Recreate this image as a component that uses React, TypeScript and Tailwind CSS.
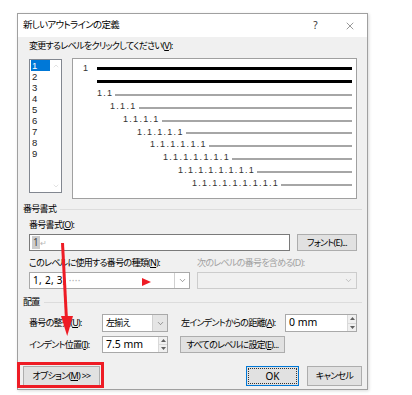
import { X, ChevronDown, ChevronUp } from "lucide-react";
import type { ReactNode } from "react";

const U = ({ children }: { children: ReactNode }) => (
  <span className="underline underline-offset-[1px]">{children}</span>
);

const levels = [
  { text: "1.1", pad: "pl-[24px]" },
  { text: "1.1.1", pad: "pl-[37px]" },
  { text: "1.1.1.1", pad: "pl-[50px]" },
  { text: "1.1.1.1.1", pad: "pl-[64px]" },
  { text: "1.1.1.1.1.1", pad: "pl-[77px]" },
  { text: "1.1.1.1.1.1.1", pad: "pl-[90px]" },
  { text: "1.1.1.1.1.1.1.1", pad: "pl-[105px]" },
  { text: "1.1.1.1.1.1.1.1.1", pad: "pl-[119px]" },
];

const SpinArrows = () => (
  <div className="w-[9px] h-full flex flex-col bg-[#f0f0f0] border-l border-[#d9d9d9]">
    <div className="flex-1 flex items-center justify-center border-b border-[#d9d9d9]">
      <svg width="5" height="3" viewBox="0 0 5 3">
        <polygon points="0,3 5,3 2.5,0" fill="#606060" />
      </svg>
    </div>
    <div className="flex-1 flex items-center justify-center">
      <svg width="5" height="3" viewBox="0 0 5 3">
        <polygon points="0,0 5,0 2.5,3" fill="#606060" />
      </svg>
    </div>
  </div>
);

const Section = ({ title }: { title: string }) => (
  <div className="flex items-center leading-[12px]">
    <span>{title}</span>
    <div className="flex-1 h-px bg-[#dcdcdc] ml-[4px]" />
  </div>
);

export default function App() {
  return (
    <div className="relative w-[412px] h-[395px] overflow-hidden bg-white pt-[13px] pl-[17px] text-[9px] tracking-[-0.7px] whitespace-nowrap text-black font-['Noto_Sans','Noto_Sans_CJK_JP',sans-serif] [font-feature-settings:'palt']">
      <div className="w-[351px] h-[377px] flex flex-col border border-[#a0a0a0] shadow-[1px_1px_3px_rgba(0,0,0,0.15)]">
        {/* Title bar */}
        <div className="h-[23px] bg-white flex items-center pl-[5px] pr-[7px]">
          <span className="text-[9.5px]">新しいアウトラインの定義</span>
          <span className="ml-auto w-[20px] text-center text-[10px] text-[#333]">?</span>
          <span className="ml-[15px] w-[20px] flex justify-center">
            <X size={12} strokeWidth={1} className="text-[#333]" />
          </span>
        </div>

        {/* Body */}
        <div className="flex-1 bg-[#f0f0f0] px-[5px] flex flex-col">
          <div className="pl-[6px] pr-[5px] flex flex-col">
            <div className="mt-[3px] leading-[12px]">
              変更するレベルをクリックしてください(<U>V</U>):
            </div>
            <div className="mt-[6px] flex gap-[10px]">
              {/* level list */}
              <div className="mt-[1px] w-[33px] h-[134px] bg-white border border-[#828790] flex">
                <div className="flex-1 flex flex-col text-[9.5px] tracking-normal font-['Liberation_Sans',sans-serif]">
                  {["1", "2", "3", "4", "5", "6", "7", "8", "9"].map((n) => (
                    <div
                      key={n}
                      className={
                        n === "1"
                          ? "ml-[1px] h-[11px] leading-[11px] pl-[1px] bg-[#0078d7] text-white"
                          : "ml-[1px] h-[11px] leading-[11px] pl-[1px] text-[#222]"
                      }
                    >
                      {n}
                    </div>
                  ))}
                </div>
                <div className="w-[11px] flex flex-col justify-between items-center py-[2px]">
                  <ChevronUp size={8} strokeWidth={1.5} className="text-[#c4c4c4]" />
                  <ChevronDown size={8} strokeWidth={1.5} className="text-[#c4c4c4]" />
                </div>
              </div>
              {/* preview */}
              <div className="flex-1 h-[141px] bg-white border border-[#a0a0a0] pt-[3px] pr-[4px] flex flex-col text-[9px] text-[#333] font-['Liberation_Sans',sans-serif] tracking-[1.3px]">
                <div className="h-[12.8px] flex items-center">
                  <span className="w-[24px] pl-[10px]">1</span>
                  <div className="flex-1 h-[3px] bg-black" />
                </div>
                <div className="h-[12.8px] flex items-center pl-[24px]">
                  <div className="flex-1 h-[3px] bg-black" />
                </div>
                {levels.map((l) => (
                  <div key={l.text} className={`h-[12.8px] flex items-center ${l.pad}`}>
                    <span>{l.text}</span>
                    <div className="flex-1 h-[2px] bg-[#a6a6a6] ml-[2px] mt-[2px]" />
                  </div>
                ))}
              </div>
            </div>
          </div>

          {/* 番号書式 */}
          <div className="mt-[4px]">
            <Section title="番号書式" />
          </div>
          <div className="pl-[6px] pr-[5px] flex flex-col">
            <div className="mt-[4px] leading-[12px]">
              番号書式(<U>O</U>):
            </div>
            <div className="mt-[3px] flex gap-[7px] h-[17px]">
              <div className="w-[261px] bg-white border border-[#7a7a7a] flex items-center pl-[2px]">
                <span className="bg-[#cccccc] text-[#444] px-[1px] leading-[13px] text-[10px] tracking-normal">1</span>
                <span className="text-[#b8b8b8] text-[8px]">↵</span>
              </div>
              <div className="flex-1 bg-[#e1e1e1] border border-[#adadad] flex items-center justify-center">
                フォント(E)...
              </div>
            </div>
            <div className="mt-[6px] flex gap-[7px] leading-[12px]">
              <div className="w-[161px]">
                このレベルに使用する番号の種類(<U>N</U>):
              </div>
              <div className="flex-1 text-[#a0a0a0]">次のレベルの番号を含める(D):</div>
            </div>
            <div className="mt-[3px] flex gap-[7px] h-[17px]">
              <div className="w-[161px] bg-white border border-[#a9a9a9] flex items-center">
                <span className="flex-1 pl-[3px] text-[10px] tracking-[0.3px]">
                  1, 2, 3, <span className="text-[#b0b0b0]">····</span>
                </span>
                <div className="w-[15px] h-full border-l border-[#d0d0d0] flex items-center justify-center">
                  <ChevronDown size={9} strokeWidth={1.5} className="text-[#555]" />
                </div>
              </div>
              <div className="flex-1 bg-[#f0f0f0] border border-[#cccccc] flex items-center justify-end">
                <div className="w-[15px] h-full flex items-center justify-center">
                  <ChevronDown size={9} strokeWidth={1.5} className="text-[#a0a0a0]" />
                </div>
              </div>
            </div>
          </div>

          {/* 配置 */}
          <div className="mt-[7px]">
            <Section title="配置" />
          </div>
          <div className="pl-[6px] pr-[5px] flex flex-col">
            <div className="mt-[6px] h-[18px] flex items-center">
              <span className="w-[73px]">
                番号の整列(<U>U</U>):
              </span>
              <div className="w-[66px] h-full bg-white border border-[#a9a9a9] flex items-center">
                <span className="flex-1 pl-[3px]">左揃え</span>
                <div className="w-[15px] h-full bg-[#e5e5e5] border-l border-[#d0d0d0] flex items-center justify-center">
                  <ChevronDown size={9} strokeWidth={1.5} className="text-[#555]" />
                </div>
              </div>
              <span className="ml-[13px] w-[104px]">
                左インデントからの距離(<U>A</U>):
              </span>
              <div className="flex-1 h-full bg-white border border-[#a9a9a9] flex items-center">
                <span className="flex-1 pl-[3px] text-[10.5px] tracking-normal">0 mm</span>
                <SpinArrows />
              </div>
            </div>
            <div className="mt-[4px] h-[17px] flex items-center">
              <span className="w-[73px]">
                インデント位置(<U>I</U>):
              </span>
              <div className="w-[66px] h-full bg-white border border-[#a9a9a9] flex items-center">
                <span className="flex-1 pl-[3px] text-[10.5px] tracking-normal">7.5 mm</span>
                <SpinArrows />
              </div>
              <div className="ml-[12px] w-[105px] h-full bg-[#e1e1e1] border border-[#adadad] flex items-center justify-center">
                すべてのレベルに設定(<U>E</U>)...
              </div>
            </div>
          </div>

          {/* buttons */}
          <div className="mt-[13px] h-[20px] flex">
            <div className="w-[77px] bg-[#e1e1e1] border border-[#adadad] flex items-center justify-center">
              オプション(<U>M</U>) &gt;&gt;
            </div>
            <div className="ml-auto w-[53px] bg-[#e1e1e1] border border-[#0078d7] p-[1px]">
              <div className="h-full border border-dotted border-[#333] flex items-center justify-center text-[10px] tracking-normal">
                OK
              </div>
            </div>
            <div className="ml-[8px] w-[55px] bg-[#e1e1e1] border border-[#adadad] flex items-center justify-center">
              キャンセル
            </div>
          </div>
        </div>
      </div>

      {/* red annotations */}
      <svg className="absolute inset-0 pointer-events-none" width="412" height="395" viewBox="0 0 412 395">
        <line x1="62.5" y1="243" x2="66.5" y2="320" stroke="#ee1c25" strokeWidth="3" />
        <polygon points="61,316 73,316 67.2,336" fill="#ee1c25" />
        <polygon points="142,278 151,282 142,286" fill="#ee1c25" />
        <rect x="18.5" y="363.5" width="84" height="23" fill="none" stroke="#ee1c25" strokeWidth="3" />
      </svg>
    </div>
  );
}
